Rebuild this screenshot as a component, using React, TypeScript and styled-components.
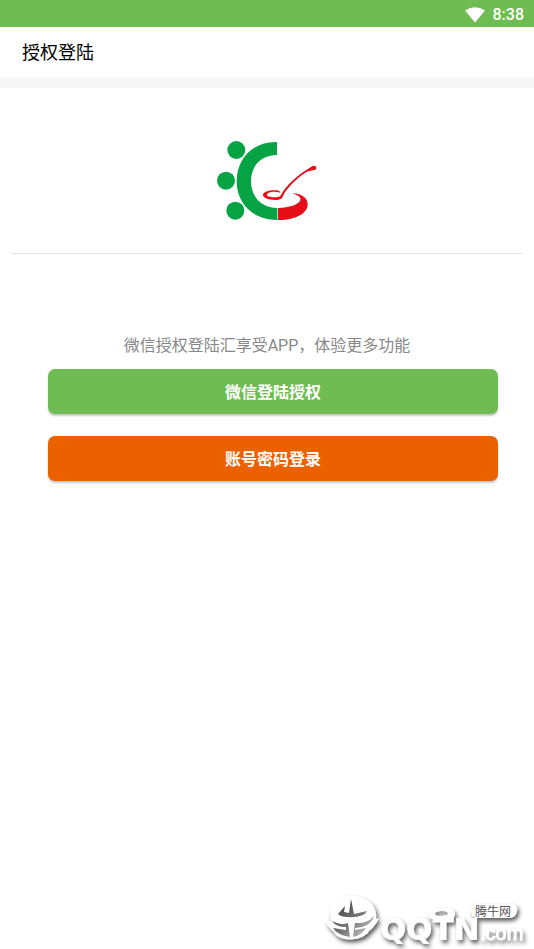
import React from "react";
import styled, { createGlobalStyle } from "styled-components";

const GlobalStyle = createGlobalStyle`
  * { box-sizing: border-box; }
  body {
    margin: 0;
    background: #fff;
    font-family: Roboto, "Noto Sans CJK SC", sans-serif;
  }
`;

const Screen = styled.div`
  position: relative;
  display: flex;
  flex-direction: column;
  min-height: 100vh;
  overflow: hidden;
`;

const StatusBar = styled.div`
  display: flex;
  align-items: center;
  justify-content: flex-end;
  gap: 8px;
  height: 27px;
  padding: 2px 10px 0 0;
  background: #6fbc52;
  color: #fff;
  font-size: 16px;
  font-weight: 500;
  line-height: 24px;
`;

const Header = styled.header`
  padding: 14px 22px 12px;
  border-bottom: 11px solid #f7f7f7;
`;

const Title = styled.h1`
  margin: 0;
  color: #000;
  font-size: 18px;
  font-weight: 400;
  line-height: 24px;
`;

const LogoPanel = styled.div`
  display: flex;
  justify-content: center;
  margin: 0 11px;
  padding: 42px 0 23px;
  border-bottom: 1px solid #e4e4e4;
`;

const Hint = styled.p`
  margin: 80px 0 11px;
  color: #888;
  font-size: 16px;
  line-height: 24px;
  text-align: center;
`;

const Actions = styled.div`
  display: flex;
  flex-direction: column;
  gap: 22px;
  padding: 0 36px 0 48px;
`;

const ActionButton = styled.button<{ $color: string }>`
  height: 45px;
  padding: 2px 0 0;
  border: 0;
  border-radius: 7px;
  background: ${(p) => p.$color};
  box-shadow: 0 2px 2px rgba(0, 0, 0, 0.22);
  color: #fff;
  font-family: inherit;
  font-size: 16px;
  font-weight: 700;
  line-height: 24px;
`;

const Watermark = styled.div`
  position: absolute;
  right: 0;
  bottom: 0;
  line-height: 0;
  pointer-events: none;
`;

const WifiIcon = () => (
  <svg width="20" height="16" viewBox="0 0 20 16" aria-hidden="true">
    <path d="M0 3.5Q10-3 20 3.5L10 15.5Z" fill="#fff" />
  </svg>
);

const BrandLogo = () => (
  <svg width="120" height="100" viewBox="0 0 360 300" role="img" aria-label="汇享受">
    <g fill="#06a344">
      <circle cx="88" cy="60" r="27" />
      <circle cx="57" cy="152" r="27" />
      <circle cx="85" cy="242" r="27" />
      <path d="M210 36C138 34 89 86 89 154C89 222 140 271 211 270V234C165 234 132 202 132 154C132 106 164 75 210 75Z" />
    </g>
    <g fill="#e60f19">
      <path d="M213 234C246 233 274 225 280 211C283 202 272 195 256 190C282 191 301 202 302 222C303 249 267 271 213 270Z" />
      <path d="M321 107C328 107 331 116 325 119C317 122 308 121 300 125C279 137 249 164 234 187C228 196 227 208 215 209C193 212 169 206 168 195C168 184 190 179 209 181C216 182 220 185 220 188C207 184 190 184 181 191C174 200 198 203 213 201C223 199 223 191 229 183C246 159 279 130 307 114C313 111 315 107 321 107Z" />
    </g>
  </svg>
);

const SiteMark = () => (
  <svg width="220" height="69" viewBox="0 0 220 69" aria-label="QQTN.com 腾牛网">
    <defs>
      <filter id="markShadow" x="-10%" y="-20%" width="125%" height="150%">
        <feDropShadow dx="2" dy="3" stdDeviation="2" floodColor="#000" floodOpacity="0.65" />
      </filter>
      <linearGradient id="emblemShade" x1="0" y1="0" x2="1" y2="1">
        <stop offset="0" stopColor="#333" />
        <stop offset="0.55" stopColor="#777" />
        <stop offset="1" stopColor="#ddd" />
      </linearGradient>
    </defs>
    <g fill="#fff" filter="url(#markShadow)">
      <path d="M11 40L18 42C12 27 22 16 37 16C52 16 64 25 62 39L65 38C61 46 58 49 55 51C50 61 25 63 20 52C16 49 13 45 11 40Z" />
      <path fillRule="evenodd" d="M124 28H131Q141 28 141 34Q141 40 130 40H124Q115 40 115 35Q115 28 124 28ZM126 31Q121 31 121 34Q121 36 127 36Q134 36 134 34Q134 31 130 31Z" />
      <path d="M164 24H198Q204 24 203 31Q202 38 195 38H164Q157 38 157 31Q157 24 164 24Z" />
      <text x="66" y="60" fontFamily="DejaVu Sans" fontWeight="700" fontSize="31">QQTN</text>
      <text x="166" y="60" fontFamily="Liberation Sans" fontSize="20" stroke="#fff" strokeWidth="0.6">.com</text>
    </g>
    <path d="M37 19L40 34L53 31Q50 38 33 37Q27 37 24 34L31 26L30 32L35 33ZM18 41Q27 46 34 43L36 57Q23 55 19 48L32 50V47Q22 47 18 41ZM41 43Q54 44 60 36Q57 47 41 48V50L52 48Q48 55 39 57Z" fill="url(#emblemShade)" />
    <text x="161" y="36" fontFamily="Noto Sans CJK SC" fontSize="12" fill="#555">腾牛网</text>
  </svg>
);

export default function App() {
  return (
    <Screen>
      <GlobalStyle />
      <StatusBar>
        <WifiIcon />
        <span>8:38</span>
      </StatusBar>
      <Header>
        <Title>授权登陆</Title>
      </Header>
      <main>
        <LogoPanel>
          <BrandLogo />
        </LogoPanel>
        <Hint>微信授权登陆汇享受APP，体验更多功能</Hint>
        <Actions>
          <ActionButton type="button" $color="#6fbc52">微信登陆授权</ActionButton>
          <ActionButton type="button" $color="#eb6100">账号密码登录</ActionButton>
        </Actions>
      </main>
      <Watermark>
        <SiteMark />
      </Watermark>
    </Screen>
  );
}
